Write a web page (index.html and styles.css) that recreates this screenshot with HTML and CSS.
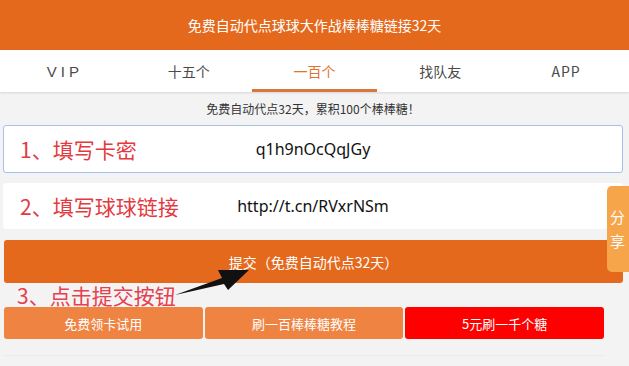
FILE: index.html
```html
<!DOCTYPE html>
<html lang="zh-CN">
<head>
    <meta charset="UTF-8">
    <meta name="viewport" content="width=device-width, initial-scale=1.0">
    <title>免费自动代点球球大作战棒棒糖链接32天</title>
    <link rel="stylesheet" href="styles.css">
</head>
<body>
    <header class="top">免费自动代点球球大作战棒棒糖链接32天</header>

    <nav class="tabs">
        <a class="tab tab-vip" href="#">VIP</a>
        <a class="tab" href="#">十五个</a>
        <a class="tab active" href="#">一百个</a>
        <a class="tab" href="#">找队友</a>
        <a class="tab tab-app" href="#">APP</a>
    </nav>

    <main class="panel">
        <p class="notice">免费自动代点32天，累积100个棒棒糖！</p>

        <div class="field field-focus">
            <span class="field-label">1、填写卡密</span>
            <span class="field-value">q1h9nOcQqJGy</span>
        </div>

        <div class="field">
            <span class="field-label">2、填写球球链接</span>
            <span class="field-value">http://t.cn/RVxrNSm</span>
        </div>

        <button class="submit" type="button">提交（免费自动代点32天）</button>

        <div class="step">
            3、点击提交按钮
            <svg class="arrow" width="80" height="40" viewBox="0 0 80 40">
                <polygon points="2,32 49,15 45,7 76,7 55,27 51,21" fill="#111"/>
            </svg>
        </div>

        <div class="links">
            <a class="link" href="#">免费领卡试用</a>
            <a class="link" href="#">刷一百棒棒糖教程</a>
            <a class="link link-red" href="#">5元刷一千个糖</a>
        </div>
    </main>

    <div class="share">分<br>享</div>
</body>
</html>
```

FILE: styles.css
```css
* {
    margin: 0;
    padding: 0;
    box-sizing: border-box;
}

body {
    font-family: "Noto Sans CJK SC", "Noto Sans", sans-serif;
    background: #f3f3f3;
    color: #333;
    overflow: hidden;
}

a {
    text-decoration: none;
}

.top {
    height: 50px;
    background: #e4691d;
    color: #fff;
    font-size: 14px;
    display: flex;
    align-items: center;
    justify-content: center;
}

.tabs {
    height: 42px;
    background: #fff;
    display: grid;
    grid-template-columns: repeat(5, 1fr);
    box-shadow: 0 1px 2px rgba(0,0,0,0.12);
}

.tab {
    display: flex;
    align-items: center;
    justify-content: center;
    color: #4a4a4a;
    font-size: 14px;
    border-bottom: 3px solid transparent;
    padding-top: 3px;
}

.tab-vip {
    letter-spacing: 4px;
    padding-left: 4px;
    font-family: "Liberation Sans", sans-serif;
    font-size: 15px;
}

.tab-app {
    letter-spacing: 1px;
}

.tab.active {
    color: #e0732e;
    border-bottom-color: #d9773a;
}

.panel {
    padding: 0 6px 0 3px;
}

.notice {
    height: 33px;
    font-size: 12px;
    line-height: 33px;
    text-align: center;
    color: #333;
}

.field {
    height: 48px;
    background: #fff;
    border: 1px solid #fff;
    border-radius: 3px;
    display: grid;
    grid-template-columns: 1fr auto 1fr;
    align-items: center;
}

.field + .field {
    margin-top: 10px;
    height: 46px;
}

.field-focus {
    border-color: #a8bfea;
}

.field-label {
    padding-left: 16px;
    color: #e3393f;
    font-size: 21px;
}

.field-value {
    font-family: "Noto Sans", sans-serif;
    font-size: 16px;
    color: #111;
}

.submit {
    display: block;
    width: calc(100% - 1px);
    margin: 11px 0 0 1px;
    height: 43px;
    border: none;
    border-radius: 3px;
    background: #e4691d;
    color: #fff;
    font-family: inherit;
    font-size: 14px;
}

.step {
    position: relative;
    height: 24px;
    padding-left: 14px;
    color: #e6404f;
    font-size: 21px;
    line-height: 24px;
}

.arrow {
    position: absolute;
    left: 170px;
    top: -20px;
}

.links {
    width: 600px;
    margin-left: 1px;
    display: grid;
    grid-template-columns: repeat(3, 1fr);
    gap: 2px;
    padding-bottom: 16px;
    border-bottom: 1px solid #ebebeb;
}

.link {
    height: 32px;
    border-radius: 3px;
    background: #ef8341;
    color: #fff;
    font-size: 13px;
    display: flex;
    align-items: center;
    justify-content: center;
}

.link-red {
    background: #fe0000;
}

.share {
    position: absolute;
    left: 607px;
    top: 186px;
    width: 26px;
    height: 86px;
    padding-left: 3px;
    border-radius: 5px 0 0 5px;
    background: #f6a54b;
    color: #fff;
    font-size: 15px;
    line-height: 24px;
    display: flex;
    align-items: center;
}
```
